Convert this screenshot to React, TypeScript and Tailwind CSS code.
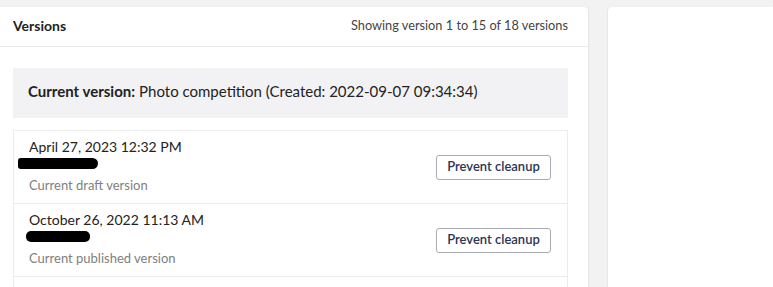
const rows = [
  { date: 'April 27, 2023 12:32 PM', note: 'Current draft version', bar: 'w-[80px] ml-[-11px] rounded-l-[3px] rounded-r-[6px]' },
  { date: 'October 26, 2022 11:13 AM', note: 'Current published version', bar: 'w-[64px] ml-[-3px] rounded-[5px]' },
  { date: 'October 26, 2022 11:05 AM', note: '', bar: 'w-[70px] ml-[-6px] rounded-[5px]' },
];

export default function App() {
  return (
    <div
      className="h-[287px] overflow-hidden bg-[#f3f2f2] pt-[7px] flex gap-[20px]"
      style={{ fontFamily: 'Lato, "Open Sans", sans-serif' }}
    >
      <div className="w-[588px] shrink-0 bg-white rounded-tr-[4px] shadow-[1px_0_1px_rgba(0,0,0,0.06)] flex flex-col">
        <div className="h-[40px] shrink-0 flex items-center justify-between pl-[13px] pr-[20px] pb-[2px] border-b border-[#e9e9e9]">
          <h2 className="text-[14px] font-bold text-[#222]">Versions</h2>
          <span className="text-[12.75px] text-[#444]">Showing version 1 to 15 of 18 versions</span>
        </div>

        <div className="pl-[13px] pr-[20px] pt-[21px]">
          <div className="h-[50px] bg-[#f2f2f4] flex items-center px-[15px] pb-[3px] text-[15px] text-[#222]">
            <span className="font-bold mr-[4px]">Current version:</span>
            Photo competition (Created: 2022-09-07 09:34:34)
          </div>

          <div className="mt-[12px] border border-[#ececec] border-b-0">
            {rows.map((r) => (
              <div
                key={r.date}
                className="h-[73px] border-b border-[#ececec] flex items-center justify-between pl-[15px] pr-[16px]"
              >
                <div className="self-start pt-[6px]">
                  <p className="text-[14px] leading-[20px] text-[#222]">{r.date}</p>
                  <div className="h-[18px]">
                    <div className={`h-[11px] mt-[1px] bg-black ${r.bar}`} />
                  </div>
                  <p className="text-[13px] leading-[18px] text-[#808080]">{r.note}</p>
                </div>
                <button className="h-[25px] w-[115px] border border-[#a8abb3] rounded-[3px] bg-white text-[13px] font-semibold text-[#2b3457]">
                  Prevent cleanup
                </button>
              </div>
            ))}
          </div>
        </div>
      </div>

      <div className="flex-1 bg-white rounded-tl-[4px] shadow-[-1px_0_1px_rgba(0,0,0,0.05)]" />
    </div>
  );
}
